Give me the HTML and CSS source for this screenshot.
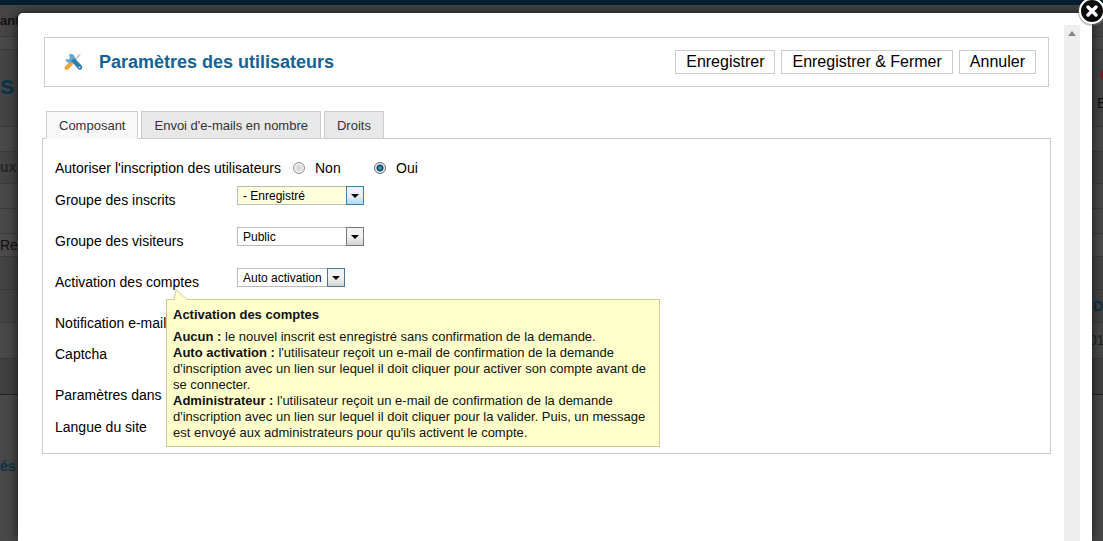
FILE: index.html
```html
<!DOCTYPE html>
<html lang="fr">
<head>
<meta charset="utf-8">
<title>Paramètres des utilisateurs</title>
<link rel="stylesheet" href="styles.css">
</head>
<body>
<div class="backdrop">
  <div class="band band-top"></div>
  <div class="band band-menu"><b>ants</b></div>
  <div class="band band-gap"></div>
  <div class="band band-title"><strong>s</strong>
    <span class="tool"><i class="tool-dot"></i>E</span></div>
  <div class="band band-line"></div>
  <div class="band band-tabs"><b>ux</b></div>
  <div class="band band-line"></div>
  <div class="band band-line"></div>
  <div class="band band-search">Rec</div>
  <div class="band band-space"></div>
  <div class="band band-head"><b class="end">D</b></div>
  <div class="band band-row"><span class="end">01</span></div>
  <div class="band band-row dark"></div>
  <div class="band band-foot"></div>
  <div class="band band-rest"><b>és</b></div>
</div>

<div class="modal" role="dialog" aria-labelledby="title">
  <button class="close" type="button" aria-label="Fermer">
    <svg viewBox="0 0 30 30" width="30" height="30">
      <circle cx="15" cy="15" r="14" fill="#777" opacity=".45"/>
      <circle cx="15" cy="14" r="12" fill="#0b0b0b" stroke="#fff" stroke-width="2"/>
      <path d="M11 10l8 8m0-8l-8 8" stroke="#fff" stroke-width="3.500" stroke-linecap="round"/>
    </svg>
  </button>
  <form class="content">
    <header class="toolbar">
      <svg class="tools" viewBox="0 0 20 20" width="20" height="20">
        <path d="M9 10.500L3.500 16" stroke="#eda63a" stroke-width="4" stroke-linecap="round"/>
        <path d="M16.500 3L11 9" stroke="#c9cdd0" stroke-width="2" stroke-linecap="round"/>
        <path d="M2.500 7l3 .5 1.500-1.500-1-3.500c3-1.500 6 0 6 4l-3 4C5.500 12 2.500 10 2.500 7z" fill="#62a9cf"/>
        <path d="M8 8.500l3.500-2.500 7.500 8c1 2-1 4.500-3.500 3.500z" fill="#2f7fae"/>
        <circle cx="16.500" cy="15.500" r="1" fill="#b9dcee"/>
      </svg>
      <h1 id="title">Paramètres des utilisateurs</h1>
      <div class="actions">
        <button type="button">Enregistrer</button>
        <button type="button">Enregistrer &amp; Fermer</button>
        <button type="button">Annuler</button>
      </div>
    </header>

    <nav class="tabs">
      <button type="button" class="active">Composant</button>
      <button type="button">Envoi d'e-mails en nombre</button>
      <button type="button">Droits</button>
    </nav>

    <section class="panel">
      <div class="row short" role="radiogroup" aria-labelledby="signup">
        <span id="signup" class="question">Autoriser l'inscription des utilisateurs</span>
        <input type="radio" name="signup" id="no"><label for="no" class="choice">Non</label>
        <input type="radio" name="signup" id="yes" checked><label for="yes">Oui</label>
      </div>
      <div class="row">
        <label class="name" for="group">Groupe des inscrits</label>
        <span class="select focus"><select id="group"><option>- Enregistré</option></select></span>
      </div>
      <div class="row">
        <label class="name" for="guest">Groupe des visiteurs</label>
        <span class="select"><select id="guest"><option>Public</option></select></span>
      </div>
      <div class="row">
        <label class="name" for="activation">Activation des comptes</label>
        <span class="select narrow"><select id="activation"><option>Auto activation</option></select></span>
        <div class="tip" role="tooltip">
          <svg class="pointer" viewBox="0 0 16 11" width="16" height="11">
            <path d="M1 11L3 1l12 10" fill="#ffffcc" stroke="#cccc99"/>
          </svg>
          <h2>Activation des comptes</h2>
          <p><b>Aucun :</b> le nouvel inscrit est enregistré sans confirmation de la demande.</p>
          <p><b>Auto activation :</b> l'utilisateur reçoit un e-mail de confirmation de la demande d'inscription avec un lien sur lequel il doit cliquer pour activer son compte avant de se connecter.</p>
          <p><b>Administrateur :</b> l'utilisateur reçoit un e-mail de confirmation de la demande d'inscription avec un lien sur lequel il doit cliquer pour la valider. Puis, un message est envoyé aux administrateurs pour qu'ils activent le compte.</p>
        </div>
      </div>
      <div class="row compact"><span>Notification e-mail</span></div>
      <div class="row"><span>Captcha</span></div>
      <div class="row short"><span>Paramètres dans</span></div>
      <div class="row last"><span>Langue du site</span></div>
    </section>
  </form>
  <div class="scrollbar">
    <svg viewBox="0 0 8 5" width="8" height="5"><path d="M4 0l4 5H0z" fill="#858585"/></svg>
  </div>
</div>
</body>
</html>
```
FILE: styles.css
```css
*, *::before, *::after { box-sizing: border-box; }
html, body { height: 100%; }
body {
  margin: 0;
  overflow: hidden;
  position: relative;
  background: #484848;
  color: #000;
  font: 14px/17px "Liberation Sans", Arial, sans-serif;
}
h1, h2, p { margin: 0; }
button, select, input { font: inherit; color: inherit; margin: 0; }

.backdrop {
  height: 100%;
  display: flex;
  flex-direction: column;
  color: #111;
}
.band {
  display: flex;
  align-items: center;
  justify-content: space-between;
  flex: none;
  border-bottom: 1px solid #3a3a3a;
}
.band-top { height: 5px; background: #04202f; border: 0; }
.band-menu { height: 32px; background: #464445; }
.band-menu b { font-size: 13px; }
.band-gap { height: 13px; }
.band-title { height: 77px; padding-bottom: 6px; background: #444; }
.band-title strong { font-size: 26px; color: #0c3347; }
.tool { width: 6px; display: flex; flex-direction: column; gap: 14px; padding-top: 10px; }
.tool-dot { width: 12px; height: 12px; border-radius: 6px; background: #6b1f26; margin-left: 3px; }
.band-line { height: 25px; }
.band-tabs { height: 32px; background: #434343; color: #262626; }
.band-search { height: 23px; background: #4b4b4b; }
.band-space { height: 33px; background: #434343; }
.band-head { height: 33px; background: #434343; }
.band-head b { color: #0c3347; }
.end { margin-left: auto; width: 10px; }
.band-row { height: 36px; }
.band-row .end { width: 14px; color: #222; }
.dark { background: #404040; border-color: #222; }
.band-foot { height: 63px; border: 0; }
.band-rest { border: 0; color: #0c3347; }

.modal {
  position: absolute;
  top: 13px;
  right: 11px;
  bottom: 0;
  left: 18px;
  display: flex;
  background: #fff;
  border-radius: 5px 5px 0 0;
  box-shadow: 0 0 12px rgba(0, 0, 0, .7);
}
.close {
  position: absolute;
  top: -16px;
  right: -15px;
  width: 30px;
  height: 30px;
  padding: 0;
  border: 0;
  background: none;
}
.close svg { display: block; }
.content { flex: 1; padding: 24px 13px 0 24px; }
.scrollbar {
  width: 16px;
  margin: 12px 12px 0 0;
  padding-top: 6px;
  background: #eee;
  display: flex;
  justify-content: center;
}

.toolbar {
  display: flex;
  align-items: center;
  height: 50px;
  margin: 0 2px 24px;
  padding: 0 12px 0 18px;
  border: 1px solid #ccc;
}
h1 {
  margin-left: 16px;
  color: #146295;
  font-size: 18px;
  line-height: 24px;
}
.actions { display: flex; gap: 6px; margin-left: auto; }
.actions button {
  height: 24px;
  padding: 0 10px;
  border: 1px solid #ccc;
  background: #fff;
  font-size: 16px;
  line-height: 22px;
}

.tabs { display: flex; gap: 3px; margin: 0 4px -1px; position: relative; }
.tabs button {
  height: 28px;
  padding: 0 12px;
  border: 1px solid #ccc;
  background: #e8e8e8;
  color: #333;
  font-size: 13px;
}
.tabs .active { background: #f9f9f9; border-bottom-color: #f9f9f9; }

.panel { border: 1px solid #ccc; padding: 15px 12px 0; }
.row { position: relative; display: flex; align-items: flex-start; height: 41px; }
.row > span:first-child, .row > label { padding-top: 6px; }
.short { height: 32px; }
.compact { height: 31px; }
.last { height: 40px; }
.name { width: 182px; }
.question { width: 230px; }

input[type="radio"] {
  appearance: none;
  width: 12px;
  height: 12px;
  margin: 8px 10px 0 8px;
  border: 1px solid #8e8f8f;
  border-radius: 50%;
  background: radial-gradient(#ccc, #f4f4f4 70%);
}
input[type="radio"]:checked {
  border-color: #5f6b75;
  background: radial-gradient(circle, #4fb0dd 0, #14405f 3px, #eee 4px);
}
.choice { width: 51px; }

.select {
  display: flex;
  position: relative;
  width: 127px;
  height: 19px;
  border: 1px solid #bbb;
  background: #fff;
}
.select select {
  appearance: none;
  width: 100%;
  padding: 2px 18px 0 5px;
  border: 0;
  background: none;
  font-size: 12px;
  line-height: 15px;
}
.select::before {
  content: "";
  position: absolute;
  top: -1px;
  right: -1px;
  bottom: -1px;
  width: 18px;
  border: 1px solid #777;
  background: linear-gradient(#f2f2f2 50%, #d2d2d2);
  pointer-events: none;
}
.select::after {
  content: "";
  position: absolute;
  top: 7px;
  right: 4px;
  border: 4px solid transparent;
  border-top-color: #000;
  border-bottom: 0;
  pointer-events: none;
}
.focus { background: #ffffdc; }
.focus::before { border-color: #3c7fb1; background: linear-gradient(#e5f4fc 50%, #acdaf3); }
.narrow { width: 108px; }
.narrow::before { border-color: #4a7692; }

.tip {
  position: absolute;
  top: 31px;
  left: 111px;
  width: 494px;
  padding: 7px 6px 5px;
  border: 1px solid #cccc99;
  background: #ffffcc;
  color: #111;
  font-size: 13px;
  line-height: 16px;
  z-index: 1;
}
.tip h2 { margin-bottom: 6px; font-size: 13px; line-height: 16px; }
.pointer { position: absolute; top: -11px; left: 6px; }
```
